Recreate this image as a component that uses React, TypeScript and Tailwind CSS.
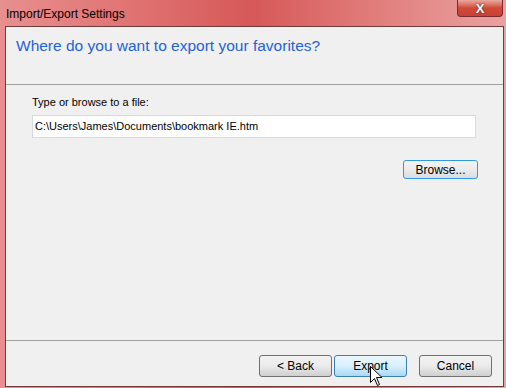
import React from 'react';

const Btn = ({ label, active = false, className = '' }: { label: string; active?: boolean; className?: string }) => (
  <button
    className={`h-[22px] w-[73px] rounded-[3px] border text-[12px] text-black ${
      active
        ? 'border-[#3c7fb1] bg-linear-to-b from-[#eaf6fd] via-[#d9f0fc] to-[#a7d9f5]'
        : 'border-[#707070] bg-linear-to-b from-[#f2f2f2] via-[#ebebeb] to-[#cfcfcf]'
    } ${className}`}
  >
    {label}
  </button>
);

const Cursor = () => (
  <svg className="absolute left-[370px] top-[366px]" width="13" height="21" viewBox="0 0 13 21">
    <path d="M0.5 0.5 L0.5 16.5 L4.5 12.5 L7.5 19.5 L9.5 18.5 L6.5 11.5 L12 11.5 Z" fill="#fff" stroke="#000" strokeWidth="1" />
  </svg>
);

const App = () => {
  return (
    <div
      className="relative w-[506px] h-[388px] overflow-hidden flex flex-col bg-linear-to-r from-[#e88f8f] via-[#d65858] to-[#e9a2a2]"
      style={{ fontFamily: '"Liberation Sans", Arial, sans-serif' }}
    >
      {/* Title bar */}
      <div className="h-[26px] flex items-start justify-between">
        <div className="pl-[6px] pt-[5px] text-[12px] text-black">Import/Export Settings</div>
        <div className="mr-[3px] w-[46px] h-[17px] rounded-b-[4px] border border-t-0 border-[#7a2a2a] bg-linear-to-b from-[#e8a8a0] via-[#d04a36] to-[#c8403a] flex items-center justify-center">
          <span className="text-[13px] font-bold text-[#f4f4f4] leading-none" style={{ textShadow: '0 0 2px #333' }}>
            X
          </span>
        </div>
      </div>

      {/* Client area */}
      <div className="ml-[5px] mr-[2px] mb-[1px] flex-1 border border-[#6e3c3c] bg-[#f0f0f0] flex flex-col">
        <div className="h-[58px] border-b border-[#a0a0a0] pl-[10px] pt-[7px]">
          <h1 className="text-[15.5px] text-[#1f63d6]">Where do you want to export your favorites?</h1>
        </div>

        <div className="flex-1 pl-[26px] pr-[27px] pt-[10px]">
          <div className="text-[11px] text-black leading-[14px]">Type or browse to a file:</div>
          <div className="mt-[6px] h-[23px] border border-[#d5dbe1] bg-white flex items-center pl-[2px] text-[11px] text-black">
            C:\Users\James\Documents\bookmark IE.htm
          </div>
          <div className="mt-[22px] flex justify-end pr-0">
            <button className="h-[19px] w-[75px] mr-[-2px] rounded-[3px] border border-[#3399dd] bg-linear-to-b from-[#f4f4f4] via-[#ebebeb] to-[#d8dde2] text-[12px] text-black">
              Browse...
            </button>
          </div>
        </div>

        <div className="h-[46px] border-t border-[#a0a0a0] flex justify-end items-start pt-[14px] pr-[11px]">
          <Btn label="< Back" />
          <Btn label="Export" active className="ml-[2px]" />
          <Btn label="Cancel" className="ml-[12px]" />
        </div>
      </div>
      <Cursor />
    </div>
  );
};

export default App;
